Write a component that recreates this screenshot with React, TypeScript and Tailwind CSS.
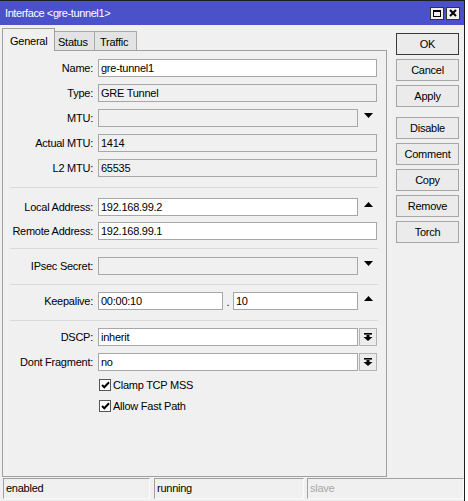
import React from "react";

const FONT = "font-['Liberation_Sans',Arial,sans-serif] text-[11px] tracking-[-0.25px] text-black";

function TriDown() {
  return (
    <svg width="9" height="5" viewBox="0 0 9 5">
      <path d="M0 0H9L4.5 5Z" fill="#000" />
    </svg>
  );
}

function TriUp() {
  return (
    <svg width="9" height="5" viewBox="0 0 9 5">
      <path d="M0 5H9L4.5 0Z" fill="#000" />
    </svg>
  );
}

// bar + down arrow used on the list pickers
function ListIcon() {
  return (
    <svg width="10" height="8" viewBox="0 0 10 8">
      <rect x="1" y="0" width="8" height="1.6" fill="#000" />
      <rect x="3.5" y="2" width="3" height="2.5" fill="#000" />
      <path d="M0.5 4H9.5L5 8Z" fill="#000" />
    </svg>
  );
}

function Label({ text }: { text: string }) {
  return <div className="w-[95px] shrink-0 pr-[5px] text-right">{text}</div>;
}

function Box({
  value,
  editable,
  width,
}: {
  value?: string;
  editable?: boolean;
  width: string;
}) {
  return (
    <div
      className={`${width} h-[18px] border border-[#a7a7a7] pl-[2px] flex items-center shrink-0 ${
        editable ? "bg-white" : "bg-[#f0f0f0]"
      }`}
    >
      {value}
    </div>
  );
}

type Trail = "none" | "down" | "up" | "list";

function Row({
  label,
  value,
  editable,
  trail = "none",
}: {
  label: string;
  value?: string;
  editable?: boolean;
  trail?: Trail;
}) {
  return (
    <div className="h-[18px] flex items-center">
      <Label text={label} />
      {trail === "none" ? (
        <Box value={value} editable={editable} width="w-[279px]" />
      ) : (
        <>
          <Box value={value} editable={editable} width="w-[260px]" />
          {trail === "list" ? (
            <div className="ml-px w-[18px] h-[18px] border border-[#b4b4b4] bg-[#ececec] flex items-center justify-center">
              <ListIcon />
            </div>
          ) : (
            <div className="w-[19px] h-[18px] flex justify-center items-start pt-[4px] pl-[1px]">
              {trail === "down" ? <TriDown /> : <TriUp />}
            </div>
          )}
        </>
      )}
    </div>
  );
}

function Sep({ mt, mb }: { mt: string; mb: string }) {
  return <div className={`${mt} ${mb} ml-[7px] w-[368px] h-px bg-[#d9d9d9]`} />;
}

function Check({ label }: { label: string }) {
  return (
    <div className="h-[18px] flex items-center pl-[96px] gap-[2px]">
      <div className="w-[12px] h-[12px] border border-[#555] bg-white flex items-center justify-center">
        <svg width="9" height="8" viewBox="0 0 9 8">
          <path d="M1 4L3.3 6.3L8 1.2" stroke="#000" strokeWidth="2" fill="none" />
        </svg>
      </div>
      <span>{label}</span>
    </div>
  );
}

function Btn({ text, primary, className = "" }: { text: string; primary?: boolean; className?: string }) {
  return (
    <div
      className={`w-[63px] h-[22px] flex items-center justify-center bg-[#ebebeb] border ${
        primary ? "border-[#3a3a3a]" : "border-[#a5a5a5]"
      } ${className}`}
    >
      {text}
    </div>
  );
}

export default function App() {
  return (
    <div className={`w-[468px] h-[501px] bg-white ${FONT}`}>
      <div className="w-[465px] h-[501px] bg-[#f0f0f0] border-r border-t border-[#1e1e1e] flex flex-col">
        {/* title bar */}
        <div className="h-[24px] bg-[#4b51c8] flex items-center pl-[5px] pr-[4px]">
          <span className="text-white tracking-[-0.4px] flex-1">Interface &lt;gre-tunnel1&gt;</span>
          <div className="flex gap-[2px]">
            <div className="w-[14px] h-[13px] bg-[#f0f0f0] border border-[#333] flex items-center justify-center">
              <div className="w-[8px] h-[7px] border border-black border-t-2" />
            </div>
            <div className="w-[14px] h-[13px] bg-[#f0f0f0] border border-[#333] flex items-center justify-center">
              <svg width="8" height="8" viewBox="0 0 8 8">
                <path d="M1 1L7 7M7 1L1 7" stroke="#000" strokeWidth="2" />
              </svg>
            </div>
          </div>
        </div>

        {/* body */}
        <div className="flex pl-[2px] pt-[3px] h-[452px]">
          <div className="w-[385px] flex flex-col">
            <div className="h-[22px] flex items-end">
              <div className="relative z-10 h-[23px] -mb-px w-[53px] bg-[#f0f0f0] border-t border-l border-r border-[#a0a0a0] pl-[7px] pt-[4px]">
                General
              </div>
              <div className="h-[19px] w-[40px] bg-[#e3e3e3] border-t border-r border-[#a9a9a9] pl-[3px] pt-[2px]">
                Status
              </div>
              <div className="h-[19px] w-[42px] bg-[#e3e3e3] border-t border-r border-[#a9a9a9] pl-[5px] pt-[2px]">
                Traffic
              </div>
            </div>
            <div className="h-[427px] border border-[#a0a0a0] pt-[8px] flex flex-col">
              <div className="flex flex-col gap-[7px]">
                <Row label="Name:" value="gre-tunnel1" editable />
                <Row label="Type:" value="GRE Tunnel" />
                <Row label="MTU:" trail="down" />
                <Row label="Actual MTU:" value="1414" />
                <Row label="L2 MTU:" value="65535" />
              </div>
              <Sep mt="mt-[10px]" mb="mb-[10px]" />
              <div className="flex flex-col gap-[6px]">
                <Row label="Local Address:" value="192.168.99.2" editable trail="up" />
                <Row label="Remote Address:" value="192.168.99.1" editable />
              </div>
              <Sep mt="mt-[8px]" mb="mb-[8px]" />
              <Row label="IPsec Secret:" trail="down" />
              <Sep mt="mt-[9px]" mb="mb-[7px]" />
              <div className="h-[18px] flex items-center">
                <Label text="Keepalive:" />
                <Box value="00:00:10" editable width="w-[125px]" />
                <div className="w-[10px] text-center pt-[2px]">.</div>
                <Box value="10" editable width="w-[125px]" />
                <div className="w-[19px] h-[18px] flex justify-center items-start pt-[4px] pl-[1px]">
                  <TriUp />
                </div>
              </div>
              <Sep mt="mt-[10px]" mb="mb-[7px]" />
              <div className="flex flex-col gap-[7px]">
                <Row label="DSCP:" value="inherit" editable trail="list" />
                <Row label="Dont Fragment:" value="no" editable trail="list" />
              </div>
              <div className="mt-[5px] flex flex-col gap-[3px]">
                <Check label="Clamp TCP MSS" />
                <Check label="Allow Fast Path" />
              </div>
            </div>
          </div>

          <div className="ml-[9px] pt-[5px] flex flex-col">
            <Btn text="OK" primary />
            <Btn text="Cancel" className="mt-[4px]" />
            <Btn text="Apply" className="mt-[4px]" />
            <Btn text="Disable" className="mt-[10px]" />
            <Btn text="Comment" className="mt-[4px]" />
            <Btn text="Copy" className="mt-[4px]" />
            <Btn text="Remove" className="mt-[4px]" />
            <Btn text="Torch" className="mt-[4px]" />
          </div>
        </div>

        {/* status bar */}
        <div className="flex pl-[3px] pt-px">
          <div className="w-[147px] h-[21px] border-t border-l border-[#a0a0a0] border-r-[#fafafa] border-b-[#fafafa] border-r border-b pl-[2px] flex items-center">
            enabled
          </div>
          <div className="ml-[4px] w-[150px] h-[21px] border-t border-l border-[#a0a0a0] border-r-[#fafafa] border-b-[#fafafa] border-r border-b pl-[2px] flex items-center">
            running
          </div>
          <div className="ml-[3px] w-[157px] h-[21px] border-t border-l border-[#a0a0a0] border-r-[#fafafa] border-b-[#fafafa] border-r border-b pl-[2px] flex items-center text-[#a8a8a8]">
            slave
          </div>
        </div>
      </div>
    </div>
  );
}
